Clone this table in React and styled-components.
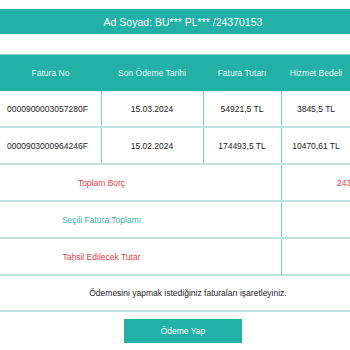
import React from "react";
import styled, { createGlobalStyle } from "styled-components";

const teal = "#22b0a7";
const rowLine = "#bfe3df";
const colLine = "#7fcdc4";
const red = "#e43c46";

const Global = createGlobalStyle`
  html, body { margin: 0; padding: 0; background: #fff; overflow: hidden; }
  body { font-family: "Liberation Sans", Arial, Helvetica, sans-serif; color: #222; }
`;

const Page = styled.div`
  width: 366px;
  padding-top: 9px;
`;

const NameBar = styled.div`
  height: 25px;
  background: ${teal};
  color: #fff;
  font-size: 10.5px;
  display: flex;
  align-items: center;
  justify-content: center;
`;

const TableWrap = styled.div`
  margin-top: 20px;
  width: 444px;
`;

const Table = styled.table`
  width: 444px;
  border-collapse: collapse;
  table-layout: fixed;
  font-size: 8.5px;
`;

const HeadCell = styled.th`
  height: 36px;
  padding: 0;
  background: ${teal};
  color: rgba(255, 255, 255, 0.93);
  font-weight: normal;
  text-align: center;
  border-top: 1px solid #8fd3cb;
`;

const Cell = styled.td`
  height: ${(p) => p.$h || 35}px;
  padding: 0 ${(p) => (p.$align === "left" ? 7 : 0)}px;
  text-align: ${(p) => p.$align || "center"};
  color: ${(p) => p.$color || "#222"};
  white-space: nowrap;
  border-bottom: 2px solid ${rowLine};
  border-left: ${(p) => (p.$open ? "none" : `1px solid ${colLine}`)};
  &:first-child { border-left: none; }
`;

const MessageRow = styled.div`
  height: 34px;
  padding-left: 10px;
  display: flex;
  align-items: center;
  justify-content: center;
  font-size: 8.5px;
  color: #222;
  border-bottom: 2px solid ${rowLine};
`;

const Actions = styled.div`
  display: flex;
  justify-content: center;
  padding-top: 7px;
`;

const PayButton = styled.button`
  width: 118px;
  height: 24px;
  border: none;
  background: ${teal};
  color: #fff;
  font-family: inherit;
  font-size: 8.5px;
  cursor: pointer;
`;

const invoices = [
  { no: "0000900003057280F", due: "15.03.2024", amount: "54921,5 TL", fee: "3845,5 TL" },
  { no: "0000903000964246F", due: "15.02.2024", amount: "174493,5 TL", fee: "10470,61 TL" },
];

const summary = [
  { label: "Toplam Borç", color: red, value: "243731,11 TL" },
  { label: "Seçili Fatura Toplamı", color: "#3db3ab", value: "" },
  { label: "Tahsil Edilecek Tutar", color: red, value: "" },
];

export default function App() {
  return (
    <>
      <Global />
      <Page>
        <NameBar>Ad Soyad: BU*** PL*** /24370153</NameBar>
        <TableWrap>
          <Table>
            <colgroup>
              <col style={{ width: 101 }} />
              <col style={{ width: 102 }} />
              <col style={{ width: 78 }} />
              <col style={{ width: 70 }} />
              <col style={{ width: 93 }} />
            </colgroup>
            <thead>
              <tr>
                <HeadCell>Fatura No</HeadCell>
                <HeadCell>Son Ödeme Tarihi</HeadCell>
                <HeadCell>Fatura Tutarı</HeadCell>
                <HeadCell>Hizmet Bedeli</HeadCell>
                <HeadCell />
              </tr>
            </thead>
            <tbody>
              {invoices.map((inv, i) => (
                <tr key={inv.no}>
                  <Cell $align="left" $h={i === 0 ? 35 : 33}>{inv.no}</Cell>
                  <Cell>{inv.due}</Cell>
                  <Cell>{inv.amount}</Cell>
                  <Cell>{inv.fee}</Cell>
                  <Cell />
                </tr>
              ))}
              {summary.map((s) => (
                <tr key={s.label}>
                  <Cell colSpan={2} $color={s.color}>{s.label}</Cell>
                  <Cell $open />
                  <Cell colSpan={2} $color={red}>{s.value}</Cell>
                </tr>
              ))}
            </tbody>
          </Table>
        </TableWrap>
        <MessageRow>Ödemesini yapmak istediğiniz faturaları işaretleyiniz.</MessageRow>
        <Actions>
          <PayButton type="button">Ödeme Yap</PayButton>
        </Actions>
      </Page>
    </>
  );
}
